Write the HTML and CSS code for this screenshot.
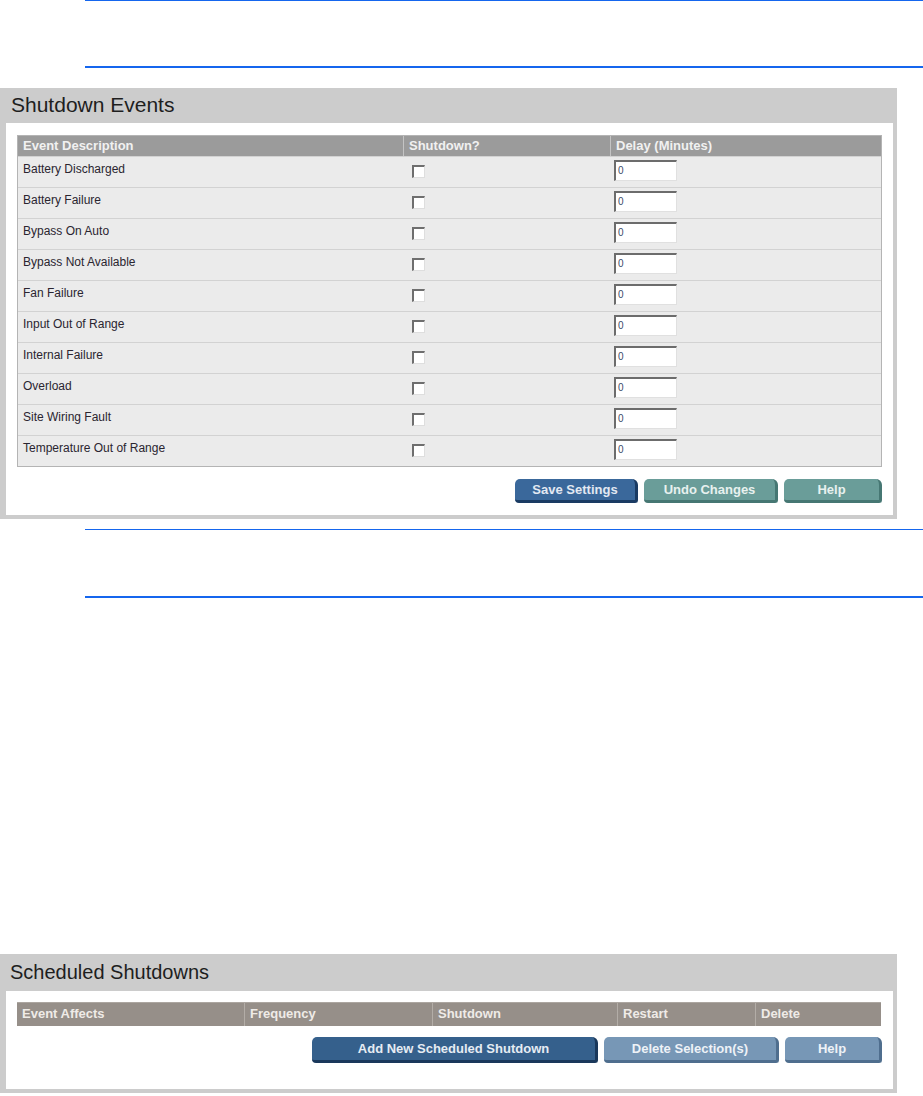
FILE: index.html
```html
<!DOCTYPE html>
<html>
<head>
<meta charset="utf-8">
<title>Shutdown</title>
<link rel="stylesheet" href="styles.css">
</head>
<body>
<div class="rule-block rule-top"></div>

<section class="panel panel-events">
  <div class="panel-title">Shutdown Events</div>
  <div class="panel-body">
    <div class="grid events">
      <div class="row head">
        <div class="cell">Event Description</div>
        <div class="cell">Shutdown?</div>
        <div class="cell">Delay (Minutes)</div>
      </div>
      <div class="row"><div class="cell">Battery Discharged</div><div class="cell"><span class="chk"></span></div><div class="cell"><span class="inp">0</span></div></div>
      <div class="row"><div class="cell">Battery Failure</div><div class="cell"><span class="chk"></span></div><div class="cell"><span class="inp">0</span></div></div>
      <div class="row"><div class="cell">Bypass On Auto</div><div class="cell"><span class="chk"></span></div><div class="cell"><span class="inp">0</span></div></div>
      <div class="row"><div class="cell">Bypass Not Available</div><div class="cell"><span class="chk"></span></div><div class="cell"><span class="inp">0</span></div></div>
      <div class="row"><div class="cell">Fan Failure</div><div class="cell"><span class="chk"></span></div><div class="cell"><span class="inp">0</span></div></div>
      <div class="row"><div class="cell">Input Out of Range</div><div class="cell"><span class="chk"></span></div><div class="cell"><span class="inp">0</span></div></div>
      <div class="row"><div class="cell">Internal Failure</div><div class="cell"><span class="chk"></span></div><div class="cell"><span class="inp">0</span></div></div>
      <div class="row"><div class="cell">Overload</div><div class="cell"><span class="chk"></span></div><div class="cell"><span class="inp">0</span></div></div>
      <div class="row"><div class="cell">Site Wiring Fault</div><div class="cell"><span class="chk"></span></div><div class="cell"><span class="inp">0</span></div></div>
      <div class="row"><div class="cell">Temperature Out of Range</div><div class="cell"><span class="chk"></span></div><div class="cell"><span class="inp">0</span></div></div>
    </div>
    <div class="buttons buttons-events">
      <span class="btn btn-blue w-save">Save Settings</span>
      <span class="btn btn-teal w-undo">Undo Changes</span>
      <span class="btn btn-teal w-help">Help</span>
    </div>
  </div>
</section>

<div class="rule-block rule-mid"></div>

<section class="panel panel-sched">
  <div class="panel-title">Scheduled Shutdowns</div>
  <div class="panel-body">
    <div class="sched-head">
      <div class="hcell">Event Affects</div>
      <div class="hcell">Frequency</div>
      <div class="hcell">Shutdown</div>
      <div class="hcell">Restart</div>
      <div class="hcell">Delete</div>
    </div>
    <div class="buttons buttons-sched">
      <span class="btn btn-navy w-add">Add New Scheduled Shutdown</span>
      <span class="btn btn-steel w-del">Delete Selection(s)</span>
      <span class="btn btn-steel w-help2">Help</span>
    </div>
  </div>
</section>
</body>
</html>
```
FILE: styles.css
```css
html, body {
  margin: 0;
  padding: 0;
  background: #ffffff;
  font-family: "Liberation Sans", Arial, sans-serif;
}

.rule-block {
  margin-left: 85px;
  box-sizing: border-box;
}
.rule-top {
  height: 68px;
  border-top: 1px solid #1566ee;
  border-bottom: 2px solid #1566ee;
  margin-bottom: 20px;
}
.rule-mid {
  height: 69px;
  margin-top: 10px;
  border-top: 1px solid #1566ee;
  border-bottom: 2px solid #1566ee;
  margin-bottom: 356px;
}

.panel {
  width: 897px;
  box-sizing: border-box;
  background: #cccccc;
  padding: 0 4px 4px 6px;
}
.panel-title {
  height: 35px;
  padding-left: 5px;
  font-size: 21px;
  line-height: 33px;
  color: #1e1e1e;
}
.panel-sched .panel-title {
  height: 37px;
  font-size: 20px;
  line-height: 37px;
  padding-left: 4px;
}
.panel-body {
  background: #ffffff;
  padding: 12px 11px 12px 11px;
}
.panel-sched .panel-body {
  padding: 11px 12px 26px 11px;
}

/* events grid */
.events {
  border: 1px solid #b4b4b4;
  width: 865px;
  box-sizing: border-box;
}
.row {
  display: grid;
  grid-template-columns: 385px 207px 1fr;
  height: 31px;
  box-sizing: border-box;
  background: #ebebeb;
  border-top: 1px solid #d2d2d2;
}
.row.head {
  height: 20px;
  border-top: none;
  background: #9b9b9b;
}
.row.head .cell {
  font-weight: bold;
  font-size: 13px;
  line-height: 20px;
  padding-top: 0;
  color: #f1f1f1;
  padding-left: 5px;
}
.row.head .cell + .cell {
  border-left: 1px solid #c4c4c4;
}
.cell {
  font-size: 12px;
  line-height: 16px;
  color: #2a2530;
  padding: 4px 0 0 5px;
  box-sizing: border-box;
}
.row .cell:nth-child(2) {
  padding-left: 9px;
}
.row .cell:nth-child(3) {
  padding-left: 4px;
  padding-top: 3px;
}
.row.head .cell:nth-child(2),
.row.head .cell:nth-child(3) {
  padding-left: 5px;
  padding-top: 0;
}
.chk {
  display: block;
  width: 13px;
  height: 13px;
  margin-top: 4px;
  box-sizing: border-box;
  background: #ffffff;
  border-top: 2px solid #6e6e6e;
  border-left: 2px solid #6e6e6e;
  border-right: 1px solid #dedede;
  border-bottom: 1px solid #dedede;
}
.inp {
  display: block;
  width: 63px;
  height: 21px;
  box-sizing: border-box;
  background: #ffffff;
  border-top: 2px solid #6c6c6c;
  border-left: 2px solid #6c6c6c;
  border-right: 1px solid #e0e0e0;
  border-bottom: 1px solid #e0e0e0;
  font-size: 10px;
  line-height: 17px;
  padding-left: 2px;
  color: #3a4a6a;
}

/* buttons */
.buttons {
  display: flex;
  justify-content: flex-end;
  gap: 6px;
  width: 865px;
}
.buttons-events {
  margin-top: 12px;
}
.buttons-sched {
  margin-top: 11px;
  gap: 6px;
}
.btn {
  display: block;
  box-sizing: border-box;
  height: 24px;
  border-radius: 5px 6px 3px 4px;
  border-right: 3px solid;
  border-bottom: 3px solid;
  font-weight: bold;
  font-size: 13px;
  line-height: 21px;
  text-align: center;
}
.buttons-sched .btn {
  height: 26px;
  line-height: 23px;
}
.btn-blue {
  background: #3a689b;
  border-color: #1a3b63;
  color: #e3e9f2;
}
.btn-teal {
  background: #6a9d99;
  border-color: #467773;
  color: #e8f1ef;
}
.btn-navy {
  background: #35608c;
  border-color: #1a385b;
  color: #e6ecf3;
}
.btn-steel {
  background: #7797b6;
  border-color: #4f6e8e;
  color: #eef2f7;
}
.w-save { width: 123px; }
.w-undo { width: 134px; }
.w-help { width: 98px; }
.w-add { width: 286px; }
.w-del { width: 175px; }
.w-help2 { width: 97px; }

/* scheduled header */
.sched-head {
  display: grid;
  grid-template-columns: 227px 188px 185px 138px 1fr;
  width: 864px;
  height: 24px;
  background: #968f89;
  border-top: 1px solid #aca6a0;
  box-sizing: border-box;
}
.hcell {
  font-weight: bold;
  font-size: 13px;
  line-height: 22px;
  color: #efebe7;
  padding-left: 5px;
}
.hcell + .hcell {
  border-left: 1px solid #b3ada7;
}
```
